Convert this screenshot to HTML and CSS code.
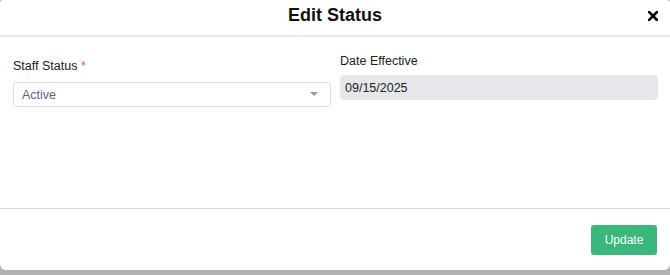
FILE: index.html
```html
<!DOCTYPE html>
<html lang="en">
<head>
    <meta charset="UTF-8">
    <meta name="viewport" content="width=device-width, initial-scale=1.0">
    <title>Edit Status</title>
    <link rel="stylesheet" href="styles.css">
</head>
<body>
    <div class="modal">
        <div class="modal-header">
            <h1>Edit Status</h1>
            <button class="close-btn" aria-label="Close">
                <svg width="10" height="10" viewBox="0 0 10 10">
                    <path d="M1 1 L9 9 M9 1 L1 9" stroke="#000" stroke-width="2.6" stroke-linecap="square"/>
                </svg>
            </button>
        </div>

        <div class="modal-body">
            <div class="form-group staff">
                <label for="staff_status">Staff Status <span class="req">*</span></label>
                <div class="select">
                    <span id="staff_status">Active</span>
                    <span class="caret"></span>
                </div>
            </div>

            <div class="form-group">
                <label for="date_effective">Date Effective</label>
                <input type="text" id="date_effective" value="09/15/2025" readonly>
            </div>
        </div>

        <div class="modal-footer">
            <button class="btn-update">Update</button>
        </div>
    </div>
</body>
</html>
```

FILE: styles.css
```css
* {
    box-sizing: border-box;
}
body {
    margin: 0;
    height: 275px;
    background: #b1b1b1;
    font-family: 'Liberation Sans', Arial, sans-serif;
    color: #222;
}
.modal {
    background: white;
    height: 270px;
    border-radius: 3px 3px 6px 6px;
    display: flex;
    flex-direction: column;
}
.modal-header {
    height: 37px;
    border-bottom: 2px solid #e8e8e8;
    display: flex;
    align-items: center;
    justify-content: center;
    position: relative;
}
.modal-header h1 {
    margin: 0;
    font-size: 18px;
    font-weight: bold;
    color: #111;
    padding-bottom: 4px;
}
.close-btn {
    position: absolute;
    right: 12px;
    top: 11px;
    background: none;
    border: none;
    padding: 0;
    width: 10px;
    height: 10px;
    display: flex;
}
.modal-body {
    flex: 1;
    display: grid;
    grid-template-columns: 318px 318px;
    column-gap: 9px;
    align-items: start;
    padding: 17px 13px 0;
    border-bottom: 1px solid #dcdcdc;
}
.form-group label {
    display: block;
    font-size: 12.5px;
    line-height: 14px;
    color: #222;
    margin-bottom: 7px;
}
.form-group.staff {
    padding-top: 5px;
}
.form-group.staff label {
    margin-bottom: 9px;
}
.req {
    color: #e25563;
}
.select {
    height: 25px;
    border: 1px solid #dcdde3;
    border-radius: 4px;
    display: flex;
    align-items: center;
    justify-content: space-between;
    padding: 0 12px 0 8px;
    font-size: 12.5px;
    color: #5f6382;
}
.caret {
    width: 0;
    height: 0;
    border-left: 4px solid transparent;
    border-right: 4px solid transparent;
    border-top: 4px solid #9a9a9a;
    margin-bottom: 2px;
}
input {
    width: 100%;
    height: 25px;
    border: none;
    border-radius: 4px;
    background: #e6e7eb;
    padding: 0 5px;
    font-family: inherit;
    font-size: 12.5px;
    color: #222;
}
.modal-footer {
    height: 61px;
    display: flex;
    justify-content: flex-end;
    align-items: flex-start;
    padding: 16px 13px 0;
}
.btn-update {
    width: 66px;
    height: 30px;
    background: #3bb67d;
    color: white;
    border: none;
    border-radius: 3px;
    font-family: inherit;
    font-size: 12px;
    cursor: pointer;
}
```
